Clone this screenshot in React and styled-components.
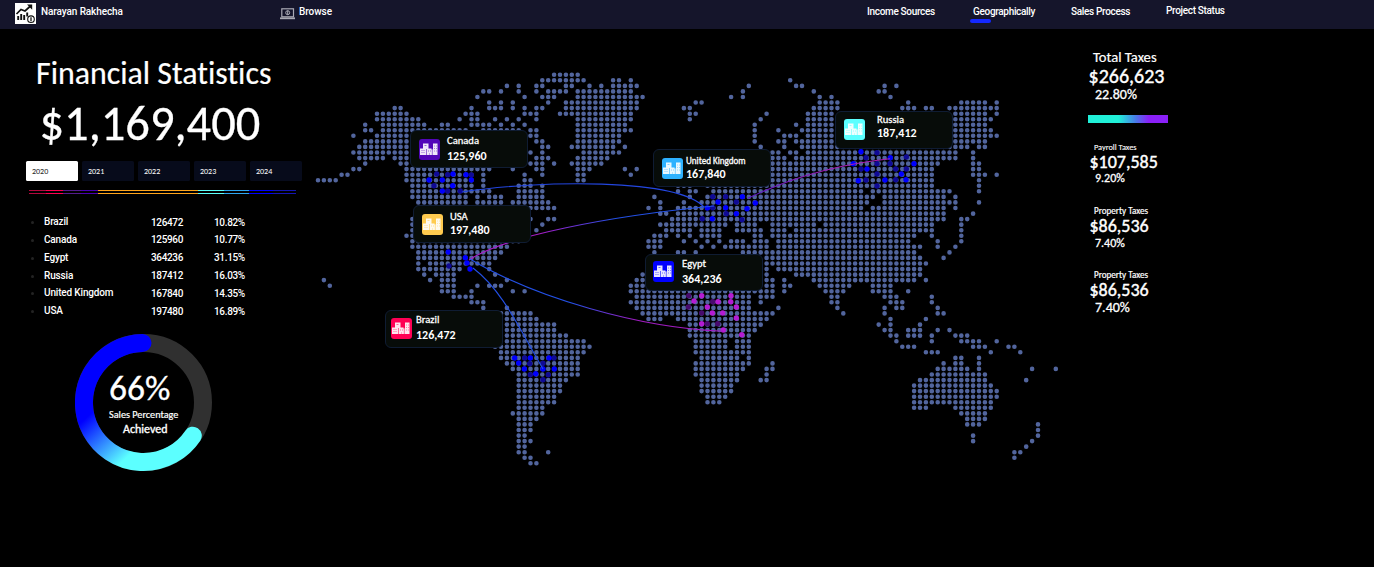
import React from "react";
import styled, { createGlobalStyle } from "styled-components";

const GlobalStyle = createGlobalStyle`
  * { box-sizing: border-box; }
  body { margin: 0; background: #000; color: #fff; overflow: hidden; }
`;

const calibri = `Carlito, Calibri, Lato, "Liberation Sans", sans-serif`;
const ui = `Roboto, "Liberation Sans", sans-serif`;

const Page = styled.div`
  width: 1374px;
  height: 567px;
  background: #000;
  font-family: ${calibri};
  font-variant-ligatures: none;
  white-space: nowrap;
`;

const Header = styled.header`
  display: flex;
  height: 29px;
  padding-left: 15px;
  background: #15152b;
  font: 500 10px/24px ${ui};
`;

const Logo = styled.svg`
  width: 21px;
  height: 21px;
  margin-top: 3px;
  flex: none;
`;

const Brand = styled.div`
  display: flex;
  gap: 5px;
  width: 265px;
  letter-spacing: -0.1px;
`;

const Browse = styled.div`
  display: flex;
  gap: 4px;
  width: 587px;
  letter-spacing: -0.05px;
  svg { width: 15px; height: 12px; margin-top: 8px; flex: none; }
`;

const Nav = styled.nav`
  display: flex;
  letter-spacing: -0.32px;
`;

const NavItem = styled.a`
  display: block;
  width: ${(p) => p.$width}px;
  line-height: ${(p) => p.$line || 24}px;
  height: 24px;
`;

const Underline = styled.i`
  display: block;
  width: 21px;
  height: 4px;
  margin: -5px 0 0 -3px;
  border-radius: 2px;
  background: #1428ff;
`;

const Main = styled.main`
  display: grid;
  grid-template-columns: 310px 760px 1fr;
  height: 538px;
`;

const Side = styled.section`
  display: flex;
  flex-direction: column;
`;

const Line = styled.div`
  height: ${(p) => p.$h}px;
  line-height: ${(p) => p.$h}px;
  font-size: ${(p) => p.$size}px;
  font-weight: ${(p) => p.$weight || 400};
  -webkit-text-stroke: ${(p) => p.$ink || 0}px #fff;
  margin: ${(p) => p.$top || 0}px 0 0 ${(p) => p.$left || 0}px;
`;

const Years = styled.div`
  display: flex;
  gap: 4px;
  margin: 12px 0 0 26px;
`;

const Year = styled.button`
  width: 52px;
  height: 20px;
  padding: 0 0 0 6px;
  border: 0;
  border-radius: 1.5px;
  text-align: left;
  font: 400 8px/20px ${calibri};
  background: ${(p) => (p.$on ? "#fff" : "#070b1b")};
  color: ${(p) => (p.$on ? "#222" : "#fff")};
`;

const Stripes = styled.div`
  display: flex;
  flex-direction: column;
  gap: 2px;
  margin: 9px 0 0 29px;
`;

const Stripe = styled.div`
  width: 267px;
  height: 1px;
  background: linear-gradient(90deg,
    #b4083e 0 17px, #ff0050 17px 34px, #551c8e 34px 52px, #4c00b4 52px 69px,
    #ffa51c 69px 169px, #5cfffa 169px 195px, #2ea6f0 195px 220px,
    #0000ff 220px 244px, #1616b4 244px);
`;

const Table = styled.div`
  display: flex;
  flex-direction: column;
  margin: 19.6px 0 0 31px;
  font: 500 10px/17.85px ${ui};
`;

const Row = styled.div`
  display: grid;
  grid-template-columns: 13px 107px 63px 40px;
  align-items: center;
  height: 17.85px;
`;

const Bullet = styled.i`
  width: 3px;
  height: 3px;
  border-radius: 50%;
  background: #232323;
`;

const Name = styled.span`
  letter-spacing: -0.16px;
  margin-top: -1px;
`;

const Num = styled.span`
  letter-spacing: -0.34px;
`;

const Gauge = styled.div`
  display: grid;
  width: 137px;
  height: 137px;
  margin: 13.3px 0 0 75px;
  > * { grid-area: 1 / 1; }
  svg { width: 137px; height: 137px; }
`;

const GaugeText = styled.div`
  padding-top: 34px;
`;

const MapArea = styled.section`
  position: relative;
  > svg { display: block; }
`;

const Card = styled.article`
  position: absolute;
  left: ${(p) => p.$x - 310}px;
  top: ${(p) => p.$y - 29}px;
  display: flex;
  width: 118px;
  height: ${(p) => p.$h || 38}px;
  padding: 8px 0 0 ${(p) => p.$pad}px;
  border: 1px solid #0f1c33;
  border-radius: 6px;
  background: #070c09;
`;

const Badge = styled.div`
  width: 21px;
  height: 21px;
  margin-top: ${(p) => p.$dy || 0}px;
  flex: none;
  border-radius: 3px;
  background: ${(p) => p.$color};
  color: ${(p) => p.$color};
  svg { display: block; width: 21px; height: 21px; }
`;

const CardText = styled.div`
  display: flex;
  flex-direction: column;
  margin: ${(p) => p.$dy}px 0 0 ${(p) => p.$gap}px;
  gap: ${(p) => p.$space}px;
`;

const Country = styled.span`
  font: 400 ${(p) => p.$size || 10.6}px/12px ${calibri};
  -webkit-text-stroke: 0.3px #fff;
`;

const Amount = styled.span`
  font: 700 12px/12px ${calibri};
`;

const TaxBar = styled.div`
  width: 80px;
  height: 8px;
  margin: 12px 0 0 18px;
  background: linear-gradient(90deg, #20f0d8 38%, #4a78e8 60%, #8a20f8 76%);
`;

/* One string per latitude row; each entry is a column or a column range. */
const LAND = `40-44
38-45 50-51 53 80
32 34 37-38 42-43 46 48 50-54 73 81-82 96 98
28-29 31 34 37 39-42 44-53 72 84 95-96
27 35 38-40 44-55 70 72 85 87 97
29 31 33 39 42-54 64-65 85-88 100 109-113 115
13-14 26 29-31 33 35 37-38 42-54 62-63 84-88 99-101 103-104 107-115
10-15 25-27 35-37 41-53 63-64 76 83-87 108-113 115
10-17 24 26-27 30 32 34 37 44-53 63 75 83-87 108-114
8 11-18 21-22 26-29 31 33 35 44-52 74 81 83-87 108-113
8-9 11-25 28-34 36-37 44-53 74 78 82-88 108-114
6 10-15 36-37 44-51 74 79-81 83-88 108-115
8-15 37-38 44-51 74 78-79 81-88 108-113
7-15 38-39 43-50 52 75 79 82-108 109-110 112-113
6-15 36 38 45-51 77-78 80-81 83-108 111
7-11 13-15 37-39 44-49 77-79 81-108 111
8 14-15 36-38 40 43-48 77-105 111-112
6-7 15-29 33 37-38 44-46 52 54 77-104 111-112
4-5 15-26 28 35 38 44-45 53 77-104 111-113 115
0-3 15-26 28 35-36 44-45 77-104 112
16-26 28 34-36 38 61-63 66-104 112
16-29 34-38 61 63-64 67-92 94-107 112
16-25 27 29-31 34-38 57 63 66-94 96-106 108
17-25 27-31 33-39 58 62 65-93 96-106 107-108 112
17-25 27-31 36-40 56 58 61-92 94-106 108
58-59 61-106 111
16 36 39-40 60-106 109-110
16 38 58-69 71-74 77-84 86-104 109
16 37 59-63 65-68 71-75 77-79 81-104 109
15-16 57-59 61 63 65-68 74-75 77-101 104 109
16-34 56-58 62 64 66 68 70-72 74-76 78-100 105 109
16-32 56-58 65 67 69-76 78-102 105 108
17-31 57 61-62 64 72-101 107
17-30 76-102 106
17 19-29 76-103
17-24 29 76 78-102
18 20-23 30 55 76 81-102
1 19 21-23 32 54-55 76-77 79 84-101 103
2 21-23 27 29-31 53-55 76-77 79-80 85-90 94-97
21-23 26 33 35 53-77 79 86-89 94-97 100
23-26 54-73 75-77 87-88 96-98 104
26-28 53-73 75 87-88 97-99 104
28 32 54-73 78 88 96 98-99 105
31-36 55-77 89 96 105-106
32-37 56-58 61-76 97 103
32-40 63-75 95 97 102
32-40 63-74 96-97 100-102 105 107
32-42 63-73 97-98 100-102 104 108-110
32-45 64-69 71-73 98 104 109-112 115
30-46 64-69 71-73 99-101 111-113 117-118
31-45 64-73 103-105 114 119
31-44 65-71 73 108-109 112
32-44 64-73 77 106 108-109 112
33-44 64-72 76-77 105-110 112 121 125
34-44 64-71 76 104-113
34-42 65-71 75-76 102-113 120
34-41 65-70 101-114
34-41 65-70 101-115
34-40 66-69 101-115
34-40 66-68 101-114
34-38 101-103 108-114
33-38 109-113
34-37 110-113
34-36 110-112 122
34-36 122
34-35 111 122
34-36 111 121
34-35 120
34-35 39 118-119
35-36 118
36-37`.split("\n");

const dots = LAND.flatMap((line, r) =>
  line.split(" ").flatMap((part) => {
    const [a, b = a] = part.split("-").map(Number);
    return Array.from({ length: b - a + 1 }, (_, i) => [318 + (a + i) * 5.902, 74.8 + r * 5.55]);
  })
);

const landPath = dots
  .map(([x, y]) => `M${(x - 2.3).toFixed(1)} ${y.toFixed(1)}a2.3 2.3 0 1 0 4.6 0a2.3 2.3 0 1 0 -4.6 0`)
  .join("");

const HOTSPOTS = [
  ["#100a96", "436.7,174 447.7,174.7 471.3,175 434,185.7 447.7,191 460.3,191 449,266 524.7,358 554,358 529.7,363.7 543,363.3 530.3,374.7 548.3,374.7 543,379.7 877,152.7 866,157.7 877,163.7 861,169 877,174 866,180 877,186 906.3,157 890,163.7 895.7,169 906.3,169 895.7,179.7 712.7,196.7 725.7,196.7 736.3,202 712.7,207.7 726.3,213.7 702.3,218.7 742,219.7"],
  ["#0000ff", "453,174 466,174.7 471.3,180 429,180 442.3,180 452.7,185.7 442.3,191 448.3,252 465.3,257.7 467,263 470,269 514.7,358 530.3,358 549,358 518.7,363 524.3,369 543,369 554.3,369 535.7,373.7 861,151.7 853.3,163.7 867,169 858.3,180.7 885,180 890.3,157.7 914,163.7 901.3,174 906,179.7 742.3,196.7 718,202 755.3,203 725.7,207.7 707.3,208 747,208.7 736.3,213.7 712.3,218.7"],
  ["#480a6e", "688.7,295.7 712.7,301.7 688.3,307 701.7,313 707.3,323.7 717.7,323.7"],
  ["#b41cd2", "701.7,295.7 731,295.7 694,301 718,301.7 730.7,301.7 707.3,307 736.3,307 712.3,313 722.7,313 736.3,318 701.7,323.7 723.3,330 741.7,334.7"],
];

const WorldMap = () => (
  <svg width="760" height="538" viewBox="310 29 760 538" fill="none">
    <defs>
      <linearGradient id="usUk" gradientUnits="userSpaceOnUse" x1="466" y1="0" x2="714" y2="0">
        <stop offset="0.3" stopColor="#a81cc8" />
        <stop offset="0.6" stopColor="#2350e6" />
      </linearGradient>
      <linearGradient id="usEg" gradientUnits="userSpaceOnUse" x1="470" y1="0" x2="723" y2="0">
        <stop offset="0.4" stopColor="#2350e6" />
        <stop offset="0.66" stopColor="#a01cc0" />
      </linearGradient>
      <linearGradient id="ukRu" gradientUnits="userSpaceOnUse" x1="748" y1="0" x2="890" y2="0">
        <stop offset="0" stopColor="#5a14c8" />
        <stop offset="0.6" stopColor="#a81cb4" />
      </linearGradient>
    </defs>
    <path d={landPath} fill="#52659d" />
    {HOTSPOTS.map(([color, list]) =>
      list.split(" ").map((p) => {
        const [x, y] = p.split(",");
        return <circle key={p} cx={x} cy={y} r="2.7" fill={color} />;
      })
    )}
    <path d="M462 192C540 180 676 178 704 207" stroke="#2346e0" strokeWidth="1.1" />
    <path d="M469 260C505 236 610 216 714 206" stroke="url(#usUk)" strokeWidth="1.1" />
    <path d="M470 259C535 298 640 328 723 331.3" stroke="url(#usEg)" strokeWidth="1.1" />
    <path d="M473 268C502 290 518 326 543 369" stroke="#2350e6" strokeWidth="1.1" />
    <path d="M748 198.3C790 178 840 164 890 158.7" stroke="url(#ukRu)" strokeWidth="1.1" />
  </svg>
);

const Buildings = () => (
  <svg viewBox="0 0 21 21">
    <path
      d="M1 9.500h3v-5h5.500v5h3v1h1.500v-6h4.500v11.500h-17.500z"
      fill="#fff"
      fillOpacity="0.9"
    />
    <path
      d="M2.500 11.500h1m1 0h1M2.500 13.500h1m1 0h1M5.500 6.500h2M9 12h1m1 0h1M10 15h1M15.200 7h0.800m1 0h0.800M15.200 9.500h0.800m1 0h0.800M15.200 12h0.800m1 0h0.800M7.500 10v6M13.300 10.500v5.500"
      stroke="currentColor"
      strokeOpacity="0.7"
      strokeWidth="0.8"
    />
  </svg>
);

const CARDS = [
  { name: "Canada", value: "125,960", x: 410, y: 130, pad: 8, color: "#5206b8", dy: 0, gap: 7, ty: -4, space: 3 },
  { name: "USA", value: "197,480", x: 413, y: 205, pad: 8, color: "#ffcb4f", dy: 0, gap: 7, ty: -3, space: 1 },
  { name: "Brazil", value: "126,472", x: 385, y: 310, pad: 5, color: "#ff0054", dy: -1, gap: 4, ty: -5, space: 3 },
  { name: "United Kingdom", value: "167,840", x: 653, y: 149, pad: 8, color: "#2eb2ff", dy: 0, gap: 3, ty: -3, space: 1, size: 9.1 },
  { name: "Egypt", value: "364,236", x: 645, y: 254, pad: 7, color: "#0000ff", dy: -2, gap: 8, ty: -5, space: 3, h: 37 },
  { name: "Russia", value: "187,412", x: 835, y: 111, pad: 8, color: "#5cffff", dy: -1, gap: 12, ty: -6, space: 1 },
];

const COUNTRIES = [
  ["Brazil", "126472", "10.82%"],
  ["Canada", "125960", "10.77%"],
  ["Egypt", "364236", "31.15%"],
  ["Russia", "187412", "16.03%"],
  ["United Kingdom", "167840", "14.35%"],
  ["USA", "197480", "16.89%"],
];

export default function App() {
  return (
    <Page>
      <GlobalStyle />
      <Header>
        <Brand>
          <Logo viewBox="0 0 21 21">
            <rect width="21" height="21" fill="#fff" />
            <g fill="none" stroke="#111" strokeWidth="1.700">
              <path d="M3.200 17v-4M6.200 17v-6M9.200 17v-5M12.200 13.500v-4" strokeWidth="1.900" />
              <path d="M1.500 11l4.500-4.500 4 1.500 5.500-5" />
              <circle cx="16" cy="16.200" r="3.300" strokeWidth="1.100" />
              <path d="M16 14.200v4" strokeWidth="1.300" />
            </g>
            <path d="M12 1.500h5.200v5.200z" fill="#111" />
          </Logo>
          <span>Narayan Rakhecha</span>
        </Brand>
        <Browse>
          <svg viewBox="0 0 15 12" fill="none" stroke="#a9a9b4">
            <rect x="1.800" y="0.800" width="11.700" height="8" strokeWidth="1.200" />
            <circle cx="7.700" cy="4.700" r="2" />
            <path d="M7.700 2.500v4.400" />
            <path d="M0 10.300h15" strokeWidth="1.800" />
          </svg>
          <span>Browse</span>
        </Browse>
        <Nav>
          <NavItem $width={106}>Income Sources</NavItem>
          <NavItem $width={98}>
            Geographically
            <Underline />
          </NavItem>
          <NavItem $width={95}>Sales Process</NavItem>
          <NavItem $width={80} $line={22}>Project Status</NavItem>
        </Nav>
      </Header>
      <Main>
        <Side>
          <Line $h={36} $size={31.9} $top={27} $left={36} $ink={0.2}>Financial Statistics</Line>
          <Line $h={50} $size={48.5} $top={7} $left={39.5} $ink={0.3}>$1,169,400</Line>
          <Years>
            {[2020, 2021, 2022, 2023, 2024].map((y) => (
              <Year key={y} $on={y === 2020}>{y}</Year>
            ))}
          </Years>
          <Stripes>
            <Stripe />
            <Stripe />
          </Stripes>
          <Table>
            {COUNTRIES.map(([name, value, share]) => (
              <Row key={name}>
                <Bullet />
                <Name>{name}</Name>
                <Num>{value}</Num>
                <Num>{share}</Num>
              </Row>
            ))}
          </Table>
          <Gauge>
            <svg viewBox="75 334 137 137" fill="none" strokeWidth="18">
              <defs>
                <linearGradient id="gauge" gradientUnits="userSpaceOnUse" x1="86" y1="418" x2="124" y2="460">
                  <stop offset="0" stopColor="#0000ff" />
                  <stop offset="1" stopColor="#5cffff" />
                </linearGradient>
              </defs>
              <circle cx="143.500" cy="402.500" r="59.500" stroke="#303030" />
              <path d="M142.500 343A59.500 59.500 0 1 0 192.800 435.700" stroke="url(#gauge)" strokeLinecap="round" />
            </svg>
            <GaugeText>
              <Line $h={40} $size={35.5} $left={34} $ink={0.3}>66%</Line>
              <Line $h={14} $size={10.2} $left={34} $ink={0.2}>Sales Percentage</Line>
              <Line $h={15} $size={12} $left={48} $ink={0.35}>Achieved</Line>
            </GaugeText>
          </Gauge>
        </Side>
        <MapArea>
          <WorldMap />
          {CARDS.map((c) => (
            <Card key={c.name} $x={c.x} $y={c.y} $pad={c.pad} $h={c.h}>
              <Badge $color={c.color} $dy={c.dy}>
                <Buildings />
              </Badge>
              <CardText $gap={c.gap} $dy={c.ty} $space={c.space}>
                <Country $size={c.size}>{c.name}</Country>
                <Amount>{c.value}</Amount>
              </CardText>
            </Card>
          ))}
        </MapArea>
        <Side>
          <Line $h={16} $size={14.6} $top={20} $left={23} $ink={0.2}>Total Taxes</Line>
          <Line $h={20} $size={20} $top={1} $left={18.5} $ink={0.4}>$266,623</Line>
          <Line $h={16} $size={14} $top={1} $left={25} $ink={0.3}>22.80%</Line>
          <TaxBar />
          <Line $h={12} $size={8.3} $top={18} $left={24} $ink={0.1}>Payroll Taxes</Line>
          <Line $h={18} $size={18} $left={19.5} $ink={0.4}>$107,585</Line>
          <Line $h={14} $size={12} $left={25} $ink={0.3}>9.20%</Line>
          <Line $h={12} $size={9.1} $top={20} $left={24} $ink={0.2}>Property Taxes</Line>
          <Line $h={18} $size={18} $left={19.5} $ink={0.4}>$86,536</Line>
          <Line $h={14} $size={12} $top={1} $left={25} $ink={0.3}>7.40%</Line>
          <Line $h={12} $size={9.1} $top={19} $left={24} $ink={0.2}>Property Taxes</Line>
          <Line $h={18} $size={18} $left={19.5} $ink={0.4}>$86,536</Line>
          <Line $h={16} $size={14} $top={1} $left={25} $ink={0.3}>7.40%</Line>
        </Side>
      </Main>
    </Page>
  );
}
